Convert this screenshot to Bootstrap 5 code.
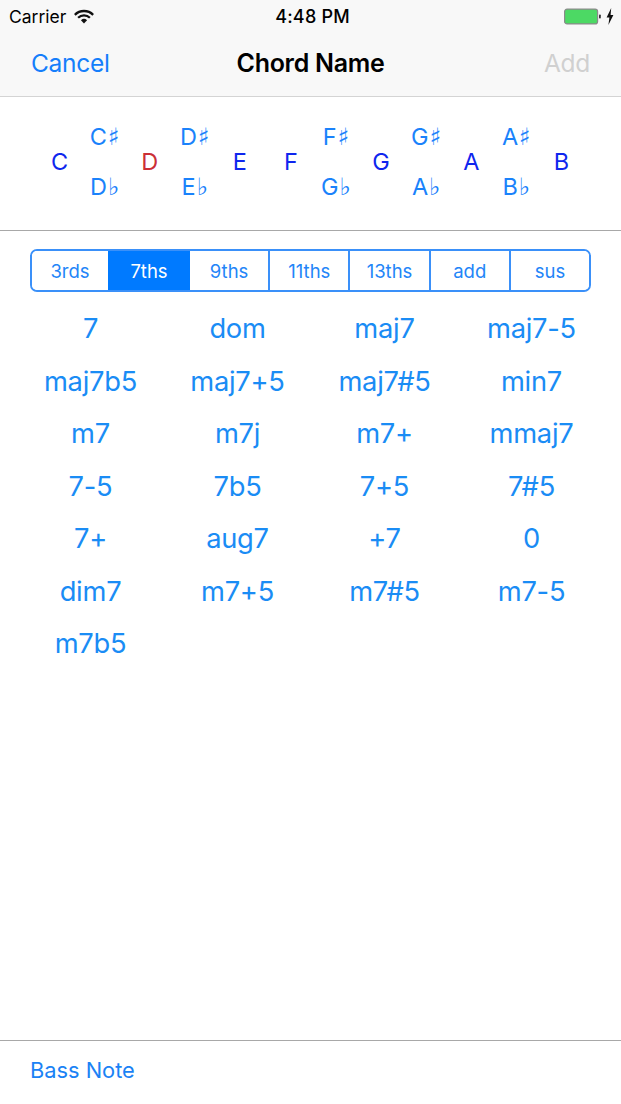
<!DOCTYPE html>
<html lang="en">
<head>
<meta charset="utf-8">
<title>Chord Name</title>
<link rel="stylesheet" href="https://cdn.jsdelivr.net/npm/bootstrap@5.3.0/dist/css/bootstrap.min.css">
<style>
html,body{height:100%}
body{font-family:Inter,"Liberation Sans",sans-serif;background:#fff;color:#000}
.screen{height:1104px}
.topbar{background:#f8f8f8;border-bottom:1px solid #d4d4d4;height:97px}
.statusline{height:33px;padding:0 7px 0 9px;font-size:17.5px;line-height:33px;position:relative}
.statustime{font-size:18px;font-weight:500;letter-spacing:.2px;margin-left:2px}
.navline{height:61px;padding:0 31px}
.navtitle{font-size:25px;font-weight:600;letter-spacing:-.3px}
.navact{font-size:24.5px;color:#157efb;letter-spacing:-.3px}
.navoff{color:#d0d0d0}
.noterow{height:134px;padding:0 37px 3px 37px;border-bottom:1px solid #a8a8a8}
.notecol{width:45.3px;font-size:23.5px;line-height:28px;text-align:center;white-space:nowrap}
.notepair{gap:22.5px;color:#1a82fb}
.notemain{color:#0f26ee}
.noteon{color:#cb2f36}
.notegap{margin-left:6px}
.accidental{font-family:"DejaVu Sans",sans-serif;font-size:24px;line-height:1;margin-left:1px}
.segwrap{padding:18px 30px 0}
.segbox{height:43px;border:2px solid #3a90f9;border-radius:7px;overflow:hidden}
.segitem{flex:1 1 0;font-size:18.5px;color:#2385f8;border-left:2px solid #3a90f9;line-height:40px;text-align:center;background:#fff}
.segitem:first-child{border-left:0;flex:0 0 76px}
.segon{background:#007aff;color:#fff;border-left:0;flex:0 0 82px}
.segon + .segitem{border-left:0}
.chordgrid{padding:11px 16px 0 17px;display:grid;grid-template-columns:repeat(4,147px);grid-auto-rows:52.5px}
.chordcell{font-size:27.3px;line-height:52.5px;text-align:center;color:#1a8cf5;letter-spacing:-.25px}
.footline{border-top:1px solid #a8a8a8;height:64px;padding:0 30px;font-size:21.8px;line-height:59px;color:#1a82f5}
</style>
</head>
<body>
<div class="screen d-flex flex-column">
  <div class="topbar">
    <div class="statusline d-flex align-items-center justify-content-between">
      <div class="d-flex align-items-center gap-2">
        <span>Carrier</span>
        <svg width="20" height="15" viewBox="0 0 19 14" aria-hidden="true"><path d="M.8 5.4a12.2 12.2 0 0 1 17.4 0M3.9 8.2a8 8 0 0 1 11.2 0" fill="none" stroke="#111" stroke-width="2.2"/><path d="M6.6 10.6a4.2 4.2 0 0 1 5.8 0L9.5 13.6z" fill="#111"/></svg>
      </div>
      <span class="statustime position-absolute top-0 start-50 translate-middle-x">4:48 PM</span>
      <div class="d-flex align-items-center gap-1">
        <svg width="38" height="17" viewBox="0 0 38 17" aria-hidden="true"><rect x=".6" y="1.1" width="33" height="14.8" rx="2.5" fill="#4cd964" stroke="#8a8a8a" stroke-width="1.2"/><rect x="35" y="6.5" width="1.8" height="4" rx=".8" fill="#333"/></svg>
        <svg width="8" height="17" viewBox="0 0 8 17" aria-hidden="true"><path d="M5.2 0 .6 9.4h2.8L2.4 17l5-10H4.6z" fill="#111"/></svg>
      </div>
    </div>
    <div class="navline d-flex align-items-center justify-content-between position-relative">
      <span class="navact">Cancel</span>
      <span class="navtitle position-absolute start-50 translate-middle-x">Chord Name</span>
      <span class="navact navoff">Add</span>
    </div>
  </div>

  <div class="noterow d-flex align-items-center">
    <div class="notecol notemain">C</div>
    <div class="notecol notepair d-flex flex-column"><span>C<span class="accidental">♯</span></span><span>D<span class="accidental">♭</span></span></div>
    <div class="notecol noteon">D</div>
    <div class="notecol notepair d-flex flex-column"><span>D<span class="accidental">♯</span></span><span>E<span class="accidental">♭</span></span></div>
    <div class="notecol notemain">E</div>
    <div class="notecol notemain notegap">F</div>
    <div class="notecol notepair d-flex flex-column"><span>F<span class="accidental">♯</span></span><span>G<span class="accidental">♭</span></span></div>
    <div class="notecol notemain">G</div>
    <div class="notecol notepair d-flex flex-column"><span>G<span class="accidental">♯</span></span><span>A<span class="accidental">♭</span></span></div>
    <div class="notecol notemain">A</div>
    <div class="notecol notepair d-flex flex-column"><span>A<span class="accidental">♯</span></span><span>B<span class="accidental">♭</span></span></div>
    <div class="notecol notemain">B</div>
  </div>

  <div class="segwrap">
    <div class="segbox d-flex">
      <div class="segitem">3rds</div>
      <div class="segitem segon">7ths</div>
      <div class="segitem">9ths</div>
      <div class="segitem">11ths</div>
      <div class="segitem">13ths</div>
      <div class="segitem">add</div>
      <div class="segitem">sus</div>
    </div>
  </div>

  <div class="chordgrid">
    <div class="chordcell">7</div><div class="chordcell">dom</div><div class="chordcell">maj7</div><div class="chordcell">maj7-5</div>
    <div class="chordcell">maj7b5</div><div class="chordcell">maj7+5</div><div class="chordcell">maj7#5</div><div class="chordcell">min7</div>
    <div class="chordcell">m7</div><div class="chordcell">m7j</div><div class="chordcell">m7+</div><div class="chordcell">mmaj7</div>
    <div class="chordcell">7-5</div><div class="chordcell">7b5</div><div class="chordcell">7+5</div><div class="chordcell">7#5</div>
    <div class="chordcell">7+</div><div class="chordcell">aug7</div><div class="chordcell">+7</div><div class="chordcell">0</div>
    <div class="chordcell">dim7</div><div class="chordcell">m7+5</div><div class="chordcell">m7#5</div><div class="chordcell">m7-5</div>
    <div class="chordcell">m7b5</div>
  </div>

  <div class="footline mt-auto">Bass Note</div>
</div>
<script src="https://cdn.jsdelivr.net/npm/bootstrap@5.3.0/dist/js/bootstrap.bundle.min.js"></script>
</body>
</html>
